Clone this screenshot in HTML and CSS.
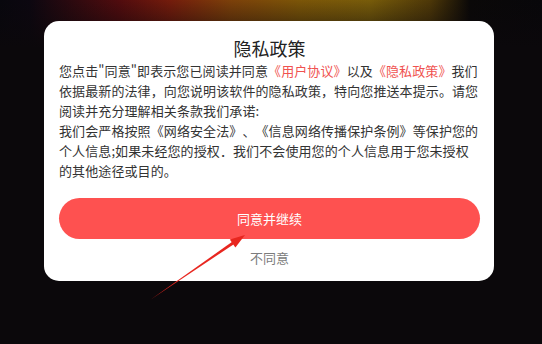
FILE: index.html
```html
<!DOCTYPE html>
<html lang="zh-CN">
<head>
  <meta charset="UTF-8" />
  <meta name="viewport" content="width=device-width, initial-scale=1.0" />
  <title>隐私政策</title>
  <link rel="stylesheet" href="styles.css">
</head>
<body>
  <!-- Privacy dialog -->
  <div class="dialog">
    <h1 class="dialog-title">隐私政策</h1>
    <p class="dialog-text">
      您点击"同意"即表示您已阅读并同意<a class="link" href="#">《用户协议》</a>以及<a class="link" href="#">《隐私政策》</a>我们<br>
      依据最新的法律，向您说明该软件的隐私政策，特向您推送本提示。请您<br>
      阅读并充分理解相关条款我们承诺:<br>
      我们会严格按照《网络安全法》、《信息网络传播保护条例》等保护您的<br>
      个人信息;如果未经您的授权．我们不会使用您的个人信息用于您未授权<br>
      的其他途径或目的。
    </p>
    <button class="btn-agree">同意并继续</button>
    <button class="btn-refuse">不同意</button>
  </div>

  <!-- Hint arrow drawn over the dialog -->
  <svg class="arrow" viewBox="0 0 542 344" width="542" height="344">
    <polygon points="150,300 232.2,241.8 233.8,244.2" fill="#e8261f"/>
    <polygon points="245,235 229.8,239.4 235.4,247.6" fill="#e8261f"/>
  </svg>
</body>
</html>
```

FILE: styles.css
```css
* {
  margin: 0;
  padding: 0;
  box-sizing: border-box;
}
body {
  font-family: "Noto Sans CJK SC", "Noto Sans", sans-serif;
  width: 542px;
  height: 344px;
  overflow: hidden;
  position: relative;
  background-color: #0b080b;
  /* warm glow at the top edge */
  background-image:
    linear-gradient(to bottom, rgba(11, 8, 11, 0) 0, rgba(11, 8, 11, 0.3) 18px, #0b080b 48px),
    linear-gradient(to right, #08070d 0, #0c0710 30px, #520c0e 120px, #741c0c 170px, #7c400a 230px, #7c5608 300px, #785c0a 370px, #4e3808 430px, #0a0808 470px, #08070a 542px);
  background-repeat: no-repeat;
  display: flex;
  flex-direction: column;
}
/* Dialog card */
.dialog {
  width: 450px;
  margin: 21px 0 0 44px;
  padding: 15px 14px 13px 15px;
  background: #fff;
  border-radius: 15px;
  display: flex;
  flex-direction: column;
}
.dialog-title {
  font-size: 18px;
  font-weight: 400;
  line-height: 24px;
  color: #222;
  text-align: center;
  margin-bottom: 1px;
}
.dialog-text {
  font-size: 13px;
  line-height: 20px;
  letter-spacing: 0.1px;
  color: #333;
  white-space: nowrap;
  text-spacing-trim: space-all;
}
.link {
  color: #f0524f;
  text-decoration: none;
}
/* Buttons */
.btn-agree {
  margin-top: 17px;
  height: 41px;
  border: none;
  border-radius: 21px;
  background: #fe5150;
  color: #fff;
  font-family: inherit;
  font-size: 13px;
}
.btn-refuse {
  margin-top: 9px;
  height: 20px;
  border: none;
  background: none;
  color: #7c7c7c;
  font-family: inherit;
  font-size: 13px;
  line-height: 20px;
}
/* Overlay arrow */
.arrow {
  position: absolute;
  top: 0;
  left: 0;
  pointer-events: none;
}
```
